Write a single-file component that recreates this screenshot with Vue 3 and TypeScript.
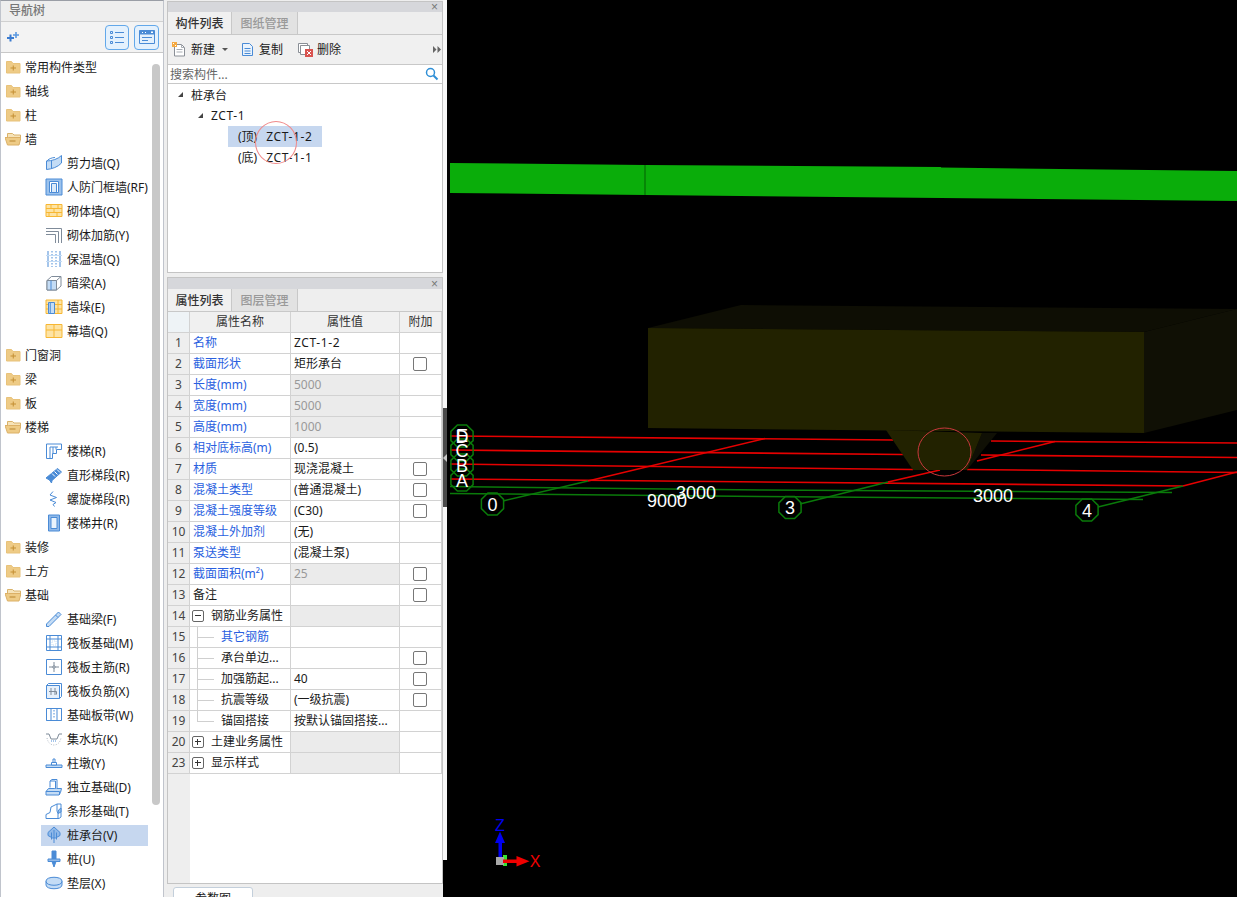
<script setup lang="ts">
// 图标：每条为 [path, fill, stroke, dash]，子项画布 18x18，文件夹画布 16x16
type Shape = [string, string, string, string?]

const B = '#4a8bd6'
const L = '#c4dcf5'
const Y = '#f7b733'
const YL = '#fde3a4'
const G = '#7f8b99'
const N = 'none'

const icons: Record<string, Shape[]> = {
  closed: [
    ['M1.500 2.500h5l1.500 2h7v9.500H1.500z', '#eecb86', '#e8c27a'],
    ['M5.500 9h5.500M8.250 6.500v5', N, '#c48f33'],
  ],
  open: [
    ['M2.500 2.500h5l1.500 1.500h6.500v4h-13z', '#f6e3b8', '#d9b26a'],
    ['M3.500 6.500h12.500L14 14H2.500L0 6.500z', '#eecb86', '#dcb066'],
    ['M4.500 10h6', N, '#b9862f'],
  ],
  shear: [
    ['M1.500 7C7 7 13 5 16.500 1.500V9C13 13 7 15 1.500 15.500z', L, B],
    ['M1.500 7.500C3 5 7 3.500 10 3.500', N, B],
    ['M6.500 6.500V14', N, B],
  ],
  rfdoor: [
    ['M1 1h16v16H1z', '#9cc2ec', B],
    ['M4.500 3.500h9v11h-9z', '#fff', B],
    ['M6.500 5.500h5v9h-5z', '#dcebfa', B],
  ],
  brick: [
    ['M1 2.500h16v12H1z', YL, Y],
    ['M1 6.500h16M1 10.500h16M6 2.500v4M13 2.500v4M9 6.500v4M4 10.500v4M12 10.500v4', N, Y],
  ],
  rebar: [['M1 2.500h15.500V17M1 5.500h12.500V17M1 8.500h9.500V17', N, G]],
  insul: [
    ['M3 1v16M15 1v16', N, B],
    ['M7 1v16M11 1v16', N, B, '1.500 1.500'],
    ['M1 5.500h16M1 11.500h16', N, L],
  ],
  hidden: [
    ['M2 6.500l4.500-4H16v9.500l-4.500 4H2z', '#fff', G],
    ['M2 6.500h9.500l4.500-4', N, G],
    ['M2 6.500h9.500v9.500H2z', L, G],
    ['M6 6.500v9.500', N, B],
  ],
  stub: [
    ['M1 2h16v13.500H1z', YL, Y],
    ['M1 6.500h16M1 11h16M13 2v13.500', N, Y],
    ['M5 4.500h4.500v11H5z', L, B],
    ['M3.500 4.500h1.500v11H3.500z', '#fff', B],
  ],
  curtain: [
    ['M1 2.500h16v13H1z', YL, Y],
    ['M1 8h16M9 2.500v13', N, Y],
  ],
  stair: [
    ['M1.500 2h15v5.500h-5v4h-4v5h-6z', '#fff', B],
    ['M5 5h8M5 5v11.500M8 5v6.500M11 5v2.500', N, B],
  ],
  flight: [
    ['M1 12L12.500 2.500 16.500 6 7 14.500 6.500 17 4.500 14z', B, B],
    ['M7 7.500l3 3M9.500 5.500l3 3M12 3.500l3 3', N, '#fff'],
  ],
  spiral: [['M8 1.500L5 5l6.500 2.500L5 10l6 2.500-3 2 1.500 2', N, B]],
  well: [
    ['M3.500 1h11v16h-11z', '#8fb8e8', B],
    ['M6 3.500h6v11H6z', '#eaf3fc', B],
  ],
  fbeam: [
    ['M1.500 14L13.500 2 16 4.500 4 16.500 1.500 16.500z', L, B],
    ['M10.500 5l2.500 2.500', N, B],
  ],
  raft: [
    ['M1.500 1.500h15v15h-15z', '#fff', B],
    ['M5 1.500v15M13 1.500v15M1.500 5h15M1.500 13h15', N, B],
    ['M7 7h4v4H7z', N, L, '1 1'],
  ],
  raftMain: [
    ['M1.500 1.500h15v15h-15z', '#fff', B],
    ['M9 4v4M9 10v4M4 9h4M10 9h4M8 8h2v2H8z', N, G],
  ],
  raftNeg: [
    ['M1.500 3.500h13v13h-13z', '#e6f0fb', B],
    ['M1.500 3.500l2-2h13v13l-2 2', N, B],
    ['M6 6v7M10 6v7M4 9.500h7.500M11.500 9.500v3', N, G],
  ],
  band: [
    ['M1.500 2.500h15v12h-15z', '#fff', B],
    ['M1.500 2.500h15M1.500 14.500h15', N, B],
    ['M6 2.500v12M12 2.500v12', N, B],
    ['M9 4v9', N, B, '1.500 1.500'],
  ],
  sump: [
    ['M1 4h3l2 5h6l2-5h3', N, G],
    ['M2 8c1 5 4 7 7 7s6-2 7-7', N, '#b3bcc7', '1 1.500'],
    ['M6 11h6', N, B, '1 1'],
  ],
  pier: [
    ['M1 11h16v2.500H1z', L, B],
    ['M6.500 8.500h5V11h-5z', '#fff', B],
    ['M8 5h2v3.500H8z', '#fff', B],
  ],
  isolated: [
    ['M1 13.500l2.500-3h13l-1 4-1.500 2.500H1z', L, B],
    ['M5 9.500V3l2-1.500h5V10.500', '#fff', B],
    ['M5 3h5.500v7.500', N, B],
    ['M1 13.500h13.500V17', N, B],
  ],
  strip: [
    ['M1 16.500v-4l4-2 1-5.500 6-3h4v13l-2 1.500z', '#fff', B],
    ['M12 2v7l1 2.500v5', N, B],
    ['M13 11.500l3-1.500v-4l-2.500 2z', '#9cc2ec', B],
  ],
  cap: [
    ['M9 1L15 6.500v3L10.500 12H7.500L3 9.500v-3z', '#8fb8e8', B],
    ['M9 4v13M6.500 6.500v7M11.500 6.500v7', N, B],
  ],
  pile: [
    ['M7 1h4v8H7z', B, B],
    ['M3 9h12v2.500H3z', '#8fb8e8', B],
    ['M7 11.500h4L9 17z', B, B],
  ],
  pad: [
    ['M1 7c0-5 16-5 16 0v4c0 5-16 5-16 0z', L, B],
    ['M1 7.500c0 5 16 5 16 0', N, B],
  ],
}

interface NavRow { label: string; icon: string; child?: boolean; selected?: boolean }

const navRows: NavRow[] = [
  { label: '常用构件类型', icon: 'closed' },
  { label: '轴线', icon: 'closed' },
  { label: '柱', icon: 'closed' },
  { label: '墙', icon: 'open' },
  { label: '剪力墙(Q)', icon: 'shear', child: true },
  { label: '人防门框墙(RF)', icon: 'rfdoor', child: true },
  { label: '砌体墙(Q)', icon: 'brick', child: true },
  { label: '砌体加筋(Y)', icon: 'rebar', child: true },
  { label: '保温墙(Q)', icon: 'insul', child: true },
  { label: '暗梁(A)', icon: 'hidden', child: true },
  { label: '墙垛(E)', icon: 'stub', child: true },
  { label: '幕墙(Q)', icon: 'curtain', child: true },
  { label: '门窗洞', icon: 'closed' },
  { label: '梁', icon: 'closed' },
  { label: '板', icon: 'closed' },
  { label: '楼梯', icon: 'open' },
  { label: '楼梯(R)', icon: 'stair', child: true },
  { label: '直形梯段(R)', icon: 'flight', child: true },
  { label: '螺旋梯段(R)', icon: 'spiral', child: true },
  { label: '楼梯井(R)', icon: 'well', child: true },
  { label: '装修', icon: 'closed' },
  { label: '土方', icon: 'closed' },
  { label: '基础', icon: 'open' },
  { label: '基础梁(F)', icon: 'fbeam', child: true },
  { label: '筏板基础(M)', icon: 'raft', child: true },
  { label: '筏板主筋(R)', icon: 'raftMain', child: true },
  { label: '筏板负筋(X)', icon: 'raftNeg', child: true },
  { label: '基础板带(W)', icon: 'band', child: true },
  { label: '集水坑(K)', icon: 'sump', child: true },
  { label: '柱墩(Y)', icon: 'pier', child: true },
  { label: '独立基础(D)', icon: 'isolated', child: true },
  { label: '条形基础(T)', icon: 'strip', child: true },
  { label: '桩承台(V)', icon: 'cap', child: true, selected: true },
  { label: '桩(U)', icon: 'pile', child: true },
  { label: '垫层(X)', icon: 'pad', child: true },
]

interface PropRow {
  n: number
  name: string
  value?: string
  blue?: boolean
  check?: boolean
  locked?: boolean
  code?: boolean
  group?: 'minus' | 'plus'
  branch?: 'mid' | 'end'
}

const propRows: PropRow[] = [
  { n: 1, name: '名称', value: 'ZCT-1-2', blue: true, code: true },
  { n: 2, name: '截面形状', value: '矩形承台', blue: true, check: true },
  { n: 3, name: '长度(mm)', value: '5000', blue: true, locked: true },
  { n: 4, name: '宽度(mm)', value: '5000', blue: true, locked: true },
  { n: 5, name: '高度(mm)', value: '1000', blue: true, locked: true },
  { n: 6, name: '相对底标高(m)', value: '(0.5)', blue: true },
  { n: 7, name: '材质', value: '现浇混凝土', blue: true, check: true },
  { n: 8, name: '混凝土类型', value: '(普通混凝土)', blue: true, check: true },
  { n: 9, name: '混凝土强度等级', value: '(C30)', blue: true, check: true },
  { n: 10, name: '混凝土外加剂', value: '(无)', blue: true },
  { n: 11, name: '泵送类型', value: '(混凝土泵)', blue: true },
  { n: 12, name: '截面面积(m²)', value: '25', blue: true, check: true, locked: true },
  { n: 13, name: '备注', check: true },
  { n: 14, name: '钢筋业务属性', group: 'minus' },
  { n: 15, name: '其它钢筋', blue: true, branch: 'mid' },
  { n: 16, name: '承台单边...', check: true, branch: 'mid' },
  { n: 17, name: '加强筋起...', value: '40', check: true, branch: 'mid' },
  { n: 18, name: '抗震等级', value: '(一级抗震)', check: true, branch: 'mid' },
  { n: 19, name: '锚固搭接', value: '按默认锚固搭接...', branch: 'end' },
  { n: 20, name: '土建业务属性', group: 'plus' },
  { n: 23, name: '显示样式', group: 'plus' },
]

// 三维视口里的轴网，坐标直接取屏幕坐标
const redLines = [
  'M450 436L893 440M991 441L1237 443',
  'M450 450L903 454.500M981 455L1237 457.500',
  'M450 464L913 469.500M967 469.500L1237 472.500',
  'M450 479L1183 486',
  'M588 481L765 438.500',
  'M888 482L940 470M977 461L1055 441.500',
  'M1183 486L1237 472',
]
const greenLines = [
  'M450 486.500L760 490L1172 492.500',
  'M450 493.500L760 496.500L1143 499.500',
  'M503 501L588 481',
  'M800 504L888 482',
  'M1098 507L1183 486',
]

const octagon = (cx: number, cy: number, r: number) => {
  const pts: string[] = []
  for (let i = 0; i < 8; i++) {
    const a = Math.PI / 8 + (i * Math.PI) / 4
    pts.push(`${(cx + r * Math.cos(a)).toFixed(1)},${(cy + r * Math.sin(a)).toFixed(1)}`)
  }
  return pts.join(' ')
}

const bubbles = [
  { x: 462, y: 436, t: 'D', r: 12 },
  { x: 462, y: 450, t: 'C', r: 12 },
  { x: 462, y: 465, t: 'B', r: 12 },
  { x: 462, y: 480, t: 'A', r: 12 },
  { x: 492.500, y: 504, t: '0', r: 12 },
  { x: 790, y: 507.500, t: '3', r: 12 },
  { x: 1087, y: 510, t: '4', r: 12 },
]
const dims = [
  { x: 696, y: 499, t: '3000' },
  { x: 667, y: 507, t: '9000' },
  { x: 993, y: 502, t: '3000' },
]
</script>

<template>
  <div class="app">
    <aside class="nav">
      <div class="nav-head">导航树</div>
      <div class="nav-tools">
        <svg class="nav-add" width="14" height="12" viewBox="0 0 14 12">
          <path d="M3.500 3.500v7M0 7h7" stroke="#3a7bd0" stroke-width="2" fill="none" />
          <path d="M9 1v6M6 4h6" stroke="#5a98e0" stroke-width="1.600" fill="none" />
        </svg>
        <button class="tool-btn first">
          <svg width="16" height="16" viewBox="0 0 16 16" fill="none" stroke="#4a8bd6">
            <path d="M1.500 2.500h2v2h-2zM1.500 7.500h2v2h-2zM1.500 12.500h2v2h-2zM6 3.500h9M6 8.500h9M6 13.500h9" />
          </svg>
        </button>
        <button class="tool-btn">
          <svg width="18" height="16" viewBox="0 0 18 16" fill="none" stroke="#4a8bd6">
            <path d="M1.500 1.500h15v13h-15z" />
            <path d="M1.500 2h15v3h-15z" fill="#4a8bd6" />
            <path d="M4 8.500h10M4 11.500h6" />
            <path d="M4 3.500h1M7 3.500h1M13 3h2l-1 1z" stroke="#fff" />
          </svg>
        </button>
      </div>
      <div class="nav-tree">
        <div v-for="row in navRows" :key="row.label + row.icon" class="nav-row" :class="{ child: row.child }">
          <span class="nav-item" :class="{ selected: row.selected }">
            <svg class="nav-icon" :viewBox="row.child ? '0 0 18 18' : '0 0 16 16'">
              <path
                v-for="(s, i) in icons[row.icon]"
                :key="i"
                :d="s[0]"
                :fill="s[1]"
                :stroke="s[2]"
                :stroke-dasharray="s[3]"
              />
            </svg>
            {{ row.label }}
          </span>
        </div>
        <div class="nav-scroll" />
      </div>
    </aside>

    <main class="mid">
      <section class="panel list-panel">
        <div class="panel-title"><span class="close">×</span></div>
        <div class="tabs">
          <span class="tab active">构件列表</span>
          <span class="tab">图纸管理</span>
        </div>
        <div class="list-tools">
          <span class="tool">
            <svg width="15" height="15" viewBox="0 0 15 15">
              <path d="M2.500 2.500h7l3 3v8.500h-10z" fill="#fff" stroke="#8a8f96" />
              <path d="M9.500 2.500v3h3M4.500 7.500h6M4.500 10h6" fill="none" stroke="#a8adb3" />
              <path d="M0 0h5v5H0z" fill="#f5a941" />
              <path d="M1 1h1v1H1zM3 3h1v1H3z" fill="#fff" />
            </svg>
            新建
          </span>
          <span class="caret" />
          <span class="tool">
            <svg width="14" height="15" viewBox="0 0 14 15" fill="none" stroke="#4a8bd6">
              <path d="M1.500 1.500h7l3 3v9h-10z" fill="#eaf3fc" />
              <path d="M3.500 6.500h6M3.500 9h6M3.500 11.500h6" />
            </svg>
            复制
          </span>
          <span class="tool">
            <svg width="15" height="15" viewBox="0 0 15 15">
              <path d="M.500 1.500h9v9h-9z" fill="#fff" stroke="#8a8f96" />
              <path d="M2.500 3.500h9v9h-9z" fill="#fff" stroke="#8a8f96" />
              <path d="M7 7h8v8H7z" fill="#d9534f" />
              <path d="M9 9l4 4M13 9l-4 4" stroke="#fff" />
            </svg>
            删除
          </span>
          <svg class="more" width="8" height="7" viewBox="0 0 8 7">
            <path d="M0 0l3.500 3.500L0 7zM4.500 0L8 3.500 4.500 7z" fill="#666" />
          </svg>
        </div>
        <div class="search">
          <span>搜索构件...</span>
          <svg width="14" height="14" viewBox="0 0 14 14" fill="none" stroke="#2f8fd6" stroke-width="1.500">
            <circle cx="5.500" cy="5.500" r="4" />
            <path d="M8.500 8.500l4 4" stroke-width="2" />
          </svg>
        </div>
        <div class="list-tree">
          <div class="tree-row lv0"><i class="tri" />桩承台</div>
          <div class="tree-row lv1"><i class="tri" /><span class="code">ZCT-1</span></div>
          <div class="tree-row lv2">
            <span class="leaf selected">(顶)<span class="code">ZCT-1-2</span></span>
          </div>
          <div class="tree-row lv2">
            <span class="leaf">(底)<span class="code">ZCT-1-1</span></span>
          </div>
          <div class="pointer" />
        </div>
      </section>

      <section class="panel prop-panel">
        <div class="panel-title"><span class="close">×</span></div>
        <div class="tabs">
          <span class="tab active">属性列表</span>
          <span class="tab">图层管理</span>
        </div>
        <div class="prop-body">
          <table class="prop-table">
            <colgroup>
              <col style="width: 22px" />
              <col style="width: 101px" />
              <col style="width: 109px" />
              <col style="width: 42px" />
            </colgroup>
            <thead>
              <tr>
                <th class="corner" />
                <th>属性名称</th>
                <th>属性值</th>
                <th>附加</th>
              </tr>
            </thead>
            <tbody>
              <tr v-for="r in propRows" :key="r.n">
                <td class="num">{{ r.n }}</td>
                <td
                  class="name"
                  :class="{ blue: r.blue, group: r.group, branch: r.branch, 'branch-end': r.branch === 'end' }"
                >
                  <span v-if="r.group" class="toggle" :class="r.group" />{{ r.name }}
                </td>
                <td class="value" :class="{ locked: r.locked, shaded: r.group, 'value-code': r.code }">{{ r.value }}</td>
                <td class="extra"><span v-if="r.check" class="check" /></td>
              </tr>
            </tbody>
          </table>
        </div>
      </section>

      <div class="bottom-tabs"><span class="bottom-tab">参数图</span></div>
    </main>

    <div class="splitter">
      <span class="notch"><i /></span>
      <span class="splitter-end" />
    </div>

    <div class="viewport">
      <svg class="scene" viewBox="447 0 790 897" width="790" height="897">
        <!-- 绿色梁 -->
        <path d="M450 163L645 165V195L450 193Z" fill="#0aad0a" />
        <path d="M645 165L941 167V198L645 195Z" fill="#0aad0a" />
        <path d="M941 167.500L1237 171V201L941 198Z" fill="#0aad0a" />
        <path d="M645 165V195" stroke="#067a06" stroke-width="1.500" />

        <!-- 承台 -->
        <path d="M648 328L741 305L1237 309L1144 332Z" fill="#0e0e04" />
        <path d="M1144 332L1237 309V410L1144 433Z" fill="#101005" />

        <!-- 轴网 -->
        <path v-for="d in redLines" :key="d" :d="d" stroke="#e60000" stroke-width="1.600" fill="none" />
        <path v-for="d in greenLines" :key="d" :d="d" stroke="#0a7a0a" stroke-width="1.500" fill="none" />

        <path d="M648 328L1144 332V433L648 428Z" fill="#222200" />
        <path d="M982 433H997L967 470Z" fill="#101005" />
        <path d="M886 430L982 433L967 470H913Z" fill="#222200" />
        <ellipse cx="944.500" cy="452" rx="26.500" ry="24" fill="none" stroke="#c8383c" stroke-width="1" />

        <polygon
          v-for="b in bubbles"
          :key="b.t + b.x"
          :points="octagon(b.x, b.y, b.r)"
          fill="none"
          stroke="#0a7a0a"
          stroke-width="1.500"
        />
        <text x="462" y="442" class="label">E</text>
        <text v-for="b in bubbles" :key="b.t + b.y" :x="b.x" :y="b.y + 6.500" class="label">{{ b.t }}</text>
        <text v-for="d in dims" :key="d.x" :x="d.x" :y="d.y" class="label">{{ d.t }}</text>

        <!-- 坐标系 -->
        <path d="M503 855h4v11h-4z" fill="#33e633" />
        <path d="M496 857h8v8h-8z" fill="#a8a8a8" />
        <path d="M498.500 843h3.500v14h-3.500z" fill="#0000f0" />
        <path d="M500 831.500L505 843H495Z" fill="#0000f0" />
        <path d="M503 859.500h14v3.500h-14z" fill="#f00000" />
        <path d="M516.500 856L529.500 861.300L516.500 866.500Z" fill="#f00000" />
        <text x="500" y="831" class="axis z">Z</text>
        <text x="535" y="867" class="axis x">X</text>
      </svg>
    </div>
  </div>
</template>

<style scoped>
.app {
  display: flex;
  width: 1237px;
  height: 897px;
  overflow: hidden;
  background: #eeeeee;
  font: 12px "Noto Sans", "Noto Sans CJK SC", sans-serif;
  color: #1a1a1a;
}

/* 导航树 */
.nav {
  flex: none;
  display: flex;
  flex-direction: column;
  box-sizing: border-box;
  width: 164px;
  border-top: 1px solid #9a9ea6;
  border-left: 1px solid #c0c4cc;
  border-right: 1px solid #c0c4cc;
}
.nav-head {
  flex: none;
  height: 20px;
  line-height: 19px;
  padding-left: 8px;
  color: #777;
  font-weight: 500;
  background: #eeeeee;
  border-bottom: 1px solid #d0d0d0;
}
.nav-tools {
  flex: none;
  display: flex;
  align-items: center;
  height: 30px;
  padding-right: 4px;
  background: #f3f3f3;
  border-bottom: 1px solid #c8c8c8;
}
.nav-add {
  margin-left: 6px;
  margin-right: auto;
}
.tool-btn {
  display: flex;
  align-items: center;
  justify-content: center;
  box-sizing: border-box;
  width: 25px;
  height: 25px;
  margin-left: 5px;
  padding: 0;
  background: #e4f1fd;
  border: 1px solid #62a8ea;
  border-radius: 4px;
}
.tool-btn.first {
  width: 24px;
}
.nav-tree {
  position: relative;
  flex: 1;
  overflow: hidden;
  padding-top: 2px;
  background: #fff;
}
.nav-row {
  display: flex;
  align-items: center;
  height: 24px;
}
.nav-item {
  display: flex;
  align-items: center;
  gap: 4px;
  padding-left: 4px;
  white-space: nowrap;
}
.nav-row.child .nav-item {
  box-sizing: border-box;
  width: 107px;
  height: 21px;
  margin-left: 40px;
}
.nav-item.selected {
  background: #c6d7ef;
}
.nav-icon {
  flex: none;
  width: 16px;
  height: 16px;
}
.nav-row.child .nav-icon {
  width: 18px;
  height: 18px;
}
.nav-scroll {
  position: absolute;
  top: 11px;
  left: 151px;
  width: 8px;
  height: 741px;
  border-radius: 4px;
  background: #c8c8c8;
}

/* 中间两块面板 */
.mid {
  flex: none;
  display: flex;
  flex-direction: column;
  box-sizing: border-box;
  width: 276px;
  margin-left: 3px;
  padding-top: 1px;
}
.panel {
  flex: none;
  display: flex;
  flex-direction: column;
  box-sizing: border-box;
  border: 1px solid #c4c4c4;
  background: #fff;
}
.list-panel {
  height: 272px;
}
.prop-panel {
  height: 607px;
  margin-top: 4px;
}
.panel-title {
  flex: none;
  display: flex;
  justify-content: flex-end;
  align-items: center;
  height: 10px;
  padding-right: 4px;
  background: #d6d7db;
}
.prop-panel .panel-title {
  height: 11px;
}
.close {
  font: 12px "Liberation Sans", sans-serif;
  color: #777;
  line-height: 10px;
}
.tabs {
  flex: none;
  display: flex;
  height: 22px;
  background: #eeeeee;
  border-bottom: 1px solid #c8c8c8;
}
.tab {
  box-sizing: border-box;
  width: 66px;
  line-height: 23px;
  text-align: center;
  color: #999;
  font-weight: 500;
  background: #e2e2e2;
  border-right: 1px solid #c8c8c8;
}
.tab.active {
  width: 64px;
  color: #333;
  background: #f0f0f0;
}
.list-tools {
  flex: none;
  display: flex;
  align-items: center;
  box-sizing: border-box;
  height: 30px;
  padding: 0 0 1px 4px;
  background: #f0f0f0;
  border-bottom: 1px solid #c8c8c8;
}
.tool {
  display: flex;
  align-items: center;
  gap: 4px;
  margin-right: 15px;
}
.caret {
  width: 0;
  height: 0;
  margin: 0 13px 0 -8px;
  border: 3px solid transparent;
  border-top: 3px solid #555;
  border-bottom: 0;
}
.more {
  margin-left: auto;
  margin-right: 1px;
}
.search {
  flex: none;
  display: flex;
  align-items: center;
  justify-content: space-between;
  height: 18px;
  padding: 0 3px 0 2px;
  color: #666;
  border-bottom: 1px solid #c8c8c8;
}
.list-tree {
  position: relative;
  flex: 1;
}
.tree-row {
  display: flex;
  align-items: center;
  height: 21px;
}
.tree-row.lv0 {
  padding-left: 10px;
}
.tree-row.lv1 {
  padding-left: 30px;
}
.tree-row.lv2 {
  padding-left: 60px;
}
.tri {
  flex: none;
  width: 0;
  height: 0;
  margin-right: 8px;
  border-left: 5px solid transparent;
  border-bottom: 5px solid #444;
}
.code {
  letter-spacing: 0.6px;
}
.leaf {
  display: block;
  box-sizing: border-box;
  width: 94px;
  height: 21px;
  line-height: 21px;
  padding-left: 10px;
  white-space: nowrap;
}
.leaf .code {
  margin-left: 9px;
}
.leaf.selected {
  background: #c6d7ef;
}
.pointer {
  position: absolute;
  left: 87px;
  top: 37px;
  width: 42px;
  height: 43px;
  box-sizing: border-box;
  border: 1.500px solid #f08a8a;
  border-radius: 50%;
}

/* 属性表 */
.prop-body {
  flex: 1;
  background: linear-gradient(90deg, #eeeeee 22px, #fff 22px);
}
.prop-table {
  table-layout: fixed;
  width: 274px;
  border-collapse: separate;
  border-spacing: 0;
}
.prop-table th,
.prop-table td {
  box-sizing: border-box;
  height: 21px;
  padding: 0 0 2px;
  border-right: 1px solid #d2d2d2;
  border-bottom: 1px solid #d2d2d2;
  white-space: nowrap;
  overflow: hidden;
}
.prop-table th {
  font-weight: 400;
  background: #f0f0f0;
  color: #333;
}
.prop-table th.corner {
  background: #eef3f6;
}
.num {
  text-align: center;
  color: #444;
  background: #eeeeee;
}
.name {
  position: relative;
  padding-left: 3px !important;
}
.name.blue {
  color: #2a5fe0;
}
.name.group {
  padding-left: 21px !important;
}
.name.branch {
  padding-left: 31px !important;
}
.name.branch::before {
  content: "";
  position: absolute;
  left: 7px;
  top: 0;
  bottom: 0;
  border-left: 1px solid #cfcfcf;
}
.name.branch-end::before {
  bottom: 50%;
}
.name.branch::after {
  content: "";
  position: absolute;
  left: 7px;
  top: 50%;
  width: 17px;
  border-top: 1px solid #cfcfcf;
}
.toggle {
  position: absolute;
  left: 2px;
  top: 4px;
  width: 12px;
  height: 12px;
  box-sizing: border-box;
  border: 1px solid #666;
  border-radius: 2px;
  background: #fff;
}
.toggle::before {
  content: "";
  position: absolute;
  left: 2px;
  right: 2px;
  top: 4px;
  border-top: 1px solid #333;
}
.toggle.plus::after {
  content: "";
  position: absolute;
  top: 2px;
  bottom: 2px;
  left: 4px;
  border-left: 1px solid #333;
}
.value {
  padding-left: 3px !important;
}
.value-code {
  letter-spacing: 0.6px;
}
.value.locked {
  color: #999;
  background: #ebebeb;
}
.value.shaded {
  background: #ebebeb;
}
.extra {
  text-align: center;
}
.check {
  display: block;
  box-sizing: border-box;
  width: 14px;
  height: 14px;
  margin: 1px auto 0;
  transform: translateX(-1px);
  border: 1px solid #777;
  border-radius: 2px;
  background: #fff;
}
.bottom-tabs {
  flex: none;
  padding: 3px 0 0 6px;
}
.bottom-tab {
  display: block;
  box-sizing: border-box;
  width: 80px;
  height: 24px;
  line-height: 22px;
  text-align: center;
  background: #fff;
  border: 1px solid #c3cfdb;
  border-radius: 3px 3px 0 0;
}

/* 分隔条 */
.splitter {
  flex: none;
  position: relative;
  width: 4px;
  background: #f8f8f8;
}
.notch {
  position: absolute;
  left: 0;
  top: 408px;
  width: 4px;
  height: 99px;
  background: #4a4a4a;
}
.notch i {
  position: absolute;
  left: 0;
  top: 46px;
  width: 0;
  height: 0;
  border: 4px solid transparent;
  border-left: 0;
  border-right: 4px solid #c8c8c8;
}
.splitter-end {
  position: absolute;
  left: 0;
  top: 860px;
  bottom: 0;
  width: 4px;
  background: #000;
}

/* 三维视口 */
.viewport {
  flex: 1;
  background: #000;
  overflow: hidden;
}
.scene {
  display: block;
}
.label {
  font: 18px "Liberation Sans", sans-serif;
  fill: #fff;
  text-anchor: middle;
}
.axis {
  font: 16px "Liberation Sans", sans-serif;
  text-anchor: middle;
}
.axis.z {
  fill: #0000f0;
}
.axis.x {
  fill: #f00000;
}
</style>

<style>
html,
body {
  margin: 0;
  overflow: hidden;
  background: #000;
}
</style>
